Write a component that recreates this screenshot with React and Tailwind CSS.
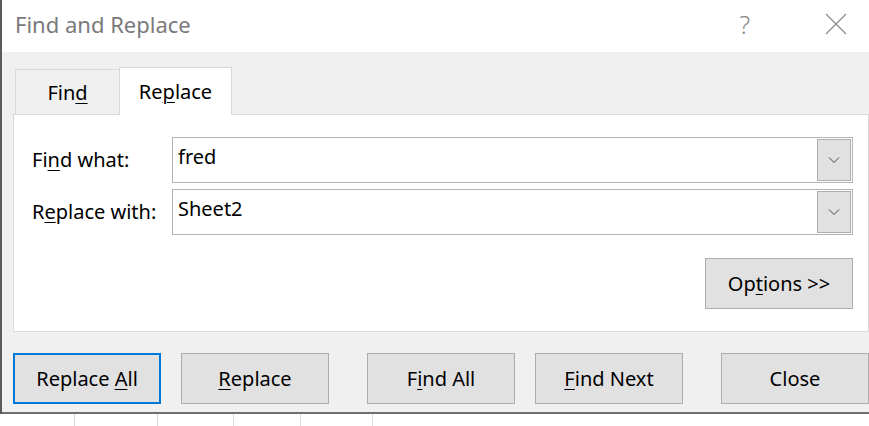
import React from 'react';

const font = { fontFamily: '"Segoe UI", "Noto Sans", "Open Sans", sans-serif' };

function Key({ children }) {
  return <span className="underline underline-offset-[3px] decoration-1">{children}</span>;
}

function Chevron() {
  return (
    <svg width="12" height="8" viewBox="0 0 12 8" fill="none">
      <path d="M1 1.5 L6 6.5 L11 1.5" stroke="#444" strokeWidth="1" />
    </svg>
  );
}

function ComboBox({ value }) {
  return (
    <div className="flex items-stretch h-[46px] w-[681px] border border-[#b4b4b4] bg-white">
      <div className="flex-1 pl-[5px] pt-[6px] text-[20px] leading-[26px] text-black">{value}</div>
      <div className="my-[1px] mr-[1px] w-[34px] flex items-center justify-center bg-[#e1e1e1] border border-[#adadad]">
        <Chevron />
      </div>
    </div>
  );
}

function DialogButton({ children, focused, className = '' }) {
  return (
    <div
      className={
        'h-[51px] w-[148px] flex items-center justify-center bg-[#e1e1e1] text-[20px] text-black ' +
        (focused ? 'border-2 border-[#0078d7] ' : 'border border-[#adadad] ') +
        className
      }
    >
      {children}
    </div>
  );
}

export default function App() {
  return (
    <div style={font} className="w-[869px] h-[426px] overflow-hidden flex flex-col bg-white">
      <div className="flex flex-col h-[414px] border-l-2 border-[#5a5a5a]">
        {/* title bar */}
        <div className="h-[52px] flex items-center bg-white shrink-0">
          <div className="ml-[13px] text-[22px] text-[#7a7a7a] leading-none -mt-[4px]">Find and Replace</div>
          <div className="ml-auto mr-[75px] text-[25px] font-light text-[#8a8a8a] leading-none -mt-[4px]">?</div>
          <svg className="mr-[22px] -mt-[4px]" width="22" height="22" viewBox="0 0 22 22">
            <path d="M1 1 L21 21 M21 1 L1 21" stroke="#8a8a8a" strokeWidth="1.2" />
          </svg>
        </div>

        {/* body */}
        <div className="flex-1 bg-[#f0f0f0] flex flex-col border-b-2 border-[#6e6e6e]">
          <div className="flex items-end pl-[11px] pt-[15px]">
            <div className="ml-[2px] w-[104px] h-[46px] mb-[-1px] border-t border-l border-[#d9d9d9] flex items-center justify-center text-[20px] text-black">
              <span>Fin<Key>d</Key></span>
            </div>
            <div className="relative z-10 w-[113px] h-[48px] mb-[-1px] bg-white border-t border-l border-r border-[#d9d9d9] flex items-center justify-center text-[20px] text-black">
              <span>Re<Key>p</Key>lace</span>
            </div>
          </div>

          <div className="ml-[11px] h-[218px] bg-white border border-[#d9d9d9] flex flex-col pt-[22px] pr-[13px]">
            <div className="flex items-center">
              <div className="w-[158px] pl-[18px] text-[20px] text-black">
                Fi<Key>n</Key>d what:
              </div>
              <ComboBox value="fred" />
            </div>
            <div className="flex items-center mt-[6px]">
              <div className="w-[158px] pl-[18px] text-[20px] text-black">
                R<Key>e</Key>place with:
              </div>
              <ComboBox value="Sheet2" />
            </div>
            <div className="flex justify-end mt-[23px] pr-[2px]">
              <DialogButton className="w-[148px]">
                <span>Op<Key>t</Key>ions &gt;&gt;</span>
              </DialogButton>
            </div>
          </div>

          <div className="flex items-center pl-[11px] mt-[21px]">
            <DialogButton focused>
              <span>Replace <Key>A</Key>ll</span>
            </DialogButton>
            <DialogButton className="ml-[20px]">
              <span><Key>R</Key>eplace</span>
            </DialogButton>
            <DialogButton className="ml-[38px]">
              <span>F<Key>i</Key>nd All</span>
            </DialogButton>
            <DialogButton className="ml-[20px]">
              <span><Key>F</Key>ind Next</span>
            </DialogButton>
            <DialogButton className="ml-[38px]">
              <span>Close</span>
            </DialogButton>
          </div>
        </div>
      </div>

      {/* spreadsheet grid below */}
      <div className="flex-1 flex bg-white">
        <div className="w-[75px] border-r border-[#dadada]" />
        <div className="w-[83px] border-r border-[#dadada]" />
        <div className="w-[76px] border-r border-[#dadada]" />
        <div className="w-[67px] border-r border-[#dadada]" />
        <div className="w-[72px] border-r border-[#dadada]" />
        <div className="flex-1" />
      </div>
    </div>
  );
}
